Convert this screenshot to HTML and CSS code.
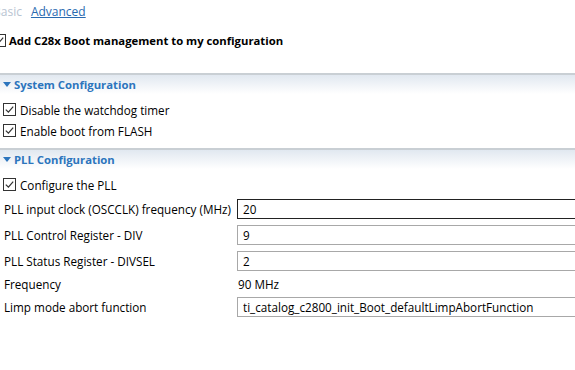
FILE: index.html
```html
<!DOCTYPE html>
<html lang="en">
<head>
    <meta charset="UTF-8">
    <title>C28x Boot</title>
    <link rel="stylesheet" href="styles.css">
</head>
<body>

    <div class="tabs">
        <span class="tab-off">Basic</span>
        <a href="#" class="tab-on">Advanced</a>
    </div>

    <label class="check main-check">
        <svg class="box" width="13" height="13" viewBox="0 0 13 13"><rect x="0.5" y="0.5" width="12" height="12" fill="#fff" stroke="#333"/><path d="M2.8 6.6l2.6 2.6 4.8-5.6" fill="none" stroke="#333" stroke-width="1.2"/></svg>
        Add C28x Boot management to my configuration
    </label>

    <section class="group">
        <div class="group-head">
            <span class="arrow"></span>System Configuration
        </div>
        <label class="check">
            <svg class="box" width="13" height="13" viewBox="0 0 13 13"><rect x="0.5" y="0.5" width="12" height="12" fill="#fff" stroke="#333"/><path d="M2.8 6.6l2.6 2.6 4.8-5.6" fill="none" stroke="#333" stroke-width="1.2"/></svg>
            Disable the watchdog timer
        </label>
        <label class="check">
            <svg class="box" width="13" height="13" viewBox="0 0 13 13"><rect x="0.5" y="0.5" width="12" height="12" fill="#fff" stroke="#333"/><path d="M2.8 6.6l2.6 2.6 4.8-5.6" fill="none" stroke="#333" stroke-width="1.2"/></svg>
            Enable boot from FLASH
        </label>
    </section>

    <section class="group pll">
        <div class="group-head">
            <span class="arrow"></span>PLL Configuration
        </div>
        <label class="check">
            <svg class="box" width="13" height="13" viewBox="0 0 13 13"><rect x="0.5" y="0.5" width="12" height="12" fill="#fff" stroke="#333"/><path d="M2.8 6.6l2.6 2.6 4.8-5.6" fill="none" stroke="#333" stroke-width="1.2"/></svg>
            Configure the PLL
        </label>

        <div class="fields">
            <span class="field-label">PLL input clock (OSCCLK) frequency (MHz)</span>
            <input class="field-input focused" type="text" value="20">

            <span class="field-label">PLL Control Register - DIV</span>
            <input class="field-input" type="text" value="9">

            <span class="field-label">PLL Status Register - DIVSEL</span>
            <input class="field-input" type="text" value="2">

            <span class="field-label">Frequency</span>
            <span class="field-value">90 MHz</span>

            <span class="field-label">Limp mode abort function</span>
            <input class="field-input" type="text" value="ti_catalog_c2800_init_Boot_defaultLimpAbortFunction">
        </div>
    </section>

</body>
</html>
```

FILE: styles.css
```css
body {
    font-family: 'Open Sans', 'Noto Sans', sans-serif;
    font-size: 11.7px;
    margin: 0;
    padding: 0;
    background-color: #fff;
    color: #000;
    width: 575px;
    height: 370px;
    overflow: hidden;
}

.tabs {
    height: 22px;
    display: flex;
    align-items: center;
    gap: 9px;
    margin-left: -7px;
    font-size: 12px;
}

.tab-off {
    color: #b8c4d2;
}

.tab-on {
    color: #2a6ab0;
    text-decoration: underline;
}

.check {
    display: flex;
    align-items: center;
    gap: 4px;
    height: 21px;
    padding-left: 3px;
}

.check .box {
    flex-shrink: 0;
}

.main-check {
    margin-top: 8px;
    margin-bottom: 22px;
    margin-left: -10px;
    font-weight: bold;
    font-size: 11.3px;
    gap: 3px;
}

.group {
    border-top: 2px solid #c9cfd4;
}

.group-head {
    height: 19px;
    display: flex;
    align-items: center;
    padding-left: 3px;
    background: linear-gradient(#e1e8f0, #ffffff);
    color: #2c75bd;
    font-weight: bold;
    font-size: 11.3px;
    margin-bottom: 5px;
}

.arrow {
    width: 0;
    height: 0;
    border-left: 4px solid transparent;
    border-right: 4px solid transparent;
    border-top: 5px solid #2c75bd;
    margin-right: 3px;
}

.pll {
    margin-top: 7px;
}

.fields {
    display: grid;
    grid-template-columns: 233px 360px;
    row-gap: 6px;
    padding-left: 4px;
    margin-top: 4px;
    align-items: center;
    line-height: 14px;
}

.field-label {
    white-space: nowrap;
}

.field-input {
    font-family: inherit;
    font-size: 11.7px;
    height: 20px;
    box-sizing: border-box;
    border: 1px solid #a8a8a8;
    padding: 0 5px;
    margin: 0;
    background: #fff;
    color: #000;
    outline: none;
}

.field-input.focused {
    border-color: #222;
}

.field-value {
    height: 14px;
    padding-left: 1px;
}
```
